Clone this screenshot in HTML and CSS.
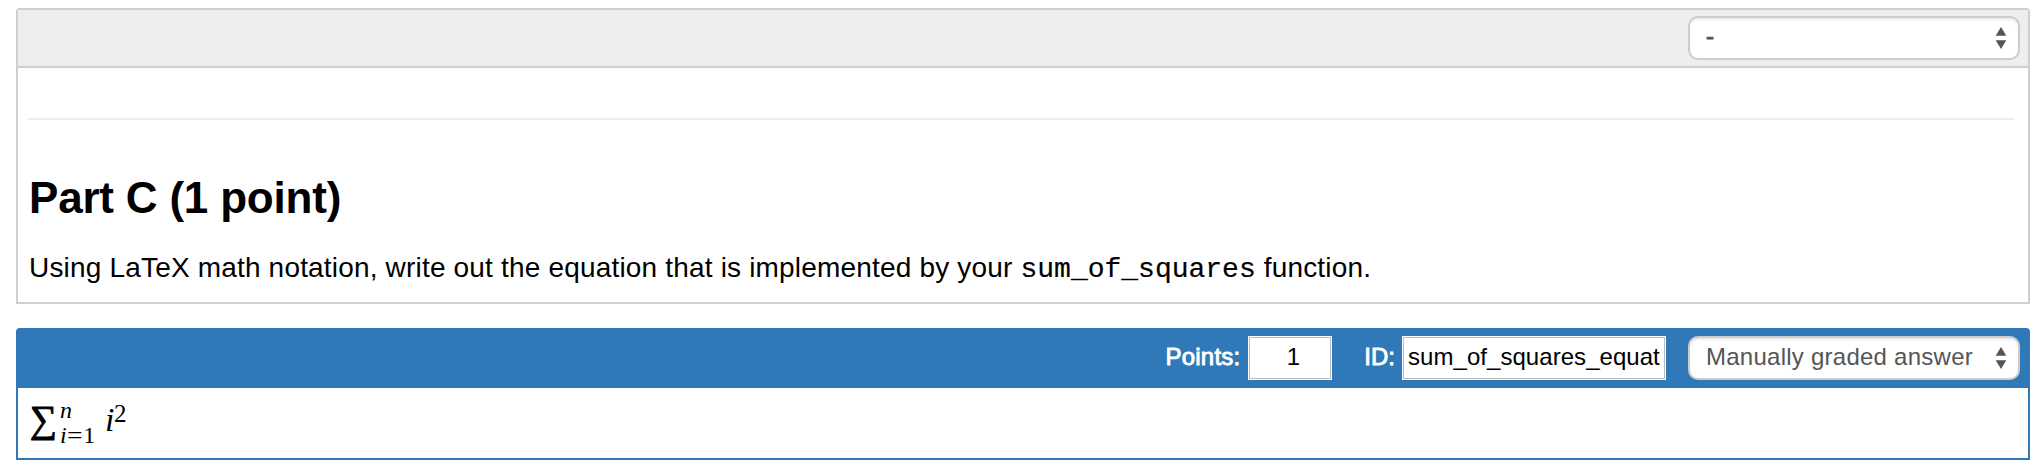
FILE: index.html
```html
<!DOCTYPE html>
<html lang="en">
<head>
<meta charset="utf-8">
<title>Notebook</title>
<link rel="stylesheet" href="styles.css">
</head>
<body>
<main class="notebook">
  <section class="cell">
    <div class="toolbar">
      <div class="select"><span class="select-label dash">-</span><svg class="arrows" width="12" height="22" viewBox="0 0 12 22"><path d="M6 0L11.3 8.7H.7ZM6 22L11.3 13.3H.7Z"/></svg></div>
    </div>
    <div class="content">
      <hr class="rule">
      <h2 class="title">Part C (1 point)</h2>
      <p class="text">Using LaTeX math notation, write out the equation that is implemented by your <code class="code">sum_of_squares</code> function.</p>
    </div>
  </section>
  <section class="cell graded">
    <div class="toolbar">
      <label class="field"><span class="field-label points-label">Points:</span><input class="input points" value="1"></label>
      <label class="field"><span class="field-label id-label">ID:</span><input class="input ident" value="sum_of_squares_equat"></label>
      <div class="select"><span class="select-label">Manually graded answer</span><svg class="arrows" width="12" height="22" viewBox="0 0 12 22"><path d="M6 0L11.3 8.7H.7ZM6 22L11.3 13.3H.7Z"/></svg></div>
    </div>
    <div class="math">
      <span class="sigma">∑</span>
      <span class="limits"><i class="upper">n</i><span class="lower"><i>i</i><span class="equals">=</span>1</span></span>
      <i class="base">i</i><span class="power">2</span>
    </div>
  </section>
</main>
</body>
</html>
```

FILE: styles.css
```css
* { box-sizing: border-box; }
body {
  margin: 0;
  background: #fff;
  color: #000;
  font-family: "Liberation Sans", Arial, sans-serif;
}
.notebook {
  display: flex;
  flex-direction: column;
  gap: 24px;
  padding: 8px 12px 8px 16px;
}
.cell {
  height: 296px;
  border: 2px solid #cfcfcf;
  border-radius: 4px 4px 0 0;
}
.toolbar {
  display: flex;
  justify-content: flex-end;
  height: 58px;
  padding: 6px 8px;
  background: #eee;
  border-bottom: 2px solid #cfcfcf;
}
.select {
  display: flex;
  align-items: center;
  justify-content: space-between;
  width: 332px;
  height: 44px;
  padding: 0 11px 0 16px;
  background: #fff;
  border: 2px solid #ccc;
  border-radius: 10px;
  box-shadow: inset 0 2px 2px rgba(0, 0, 0, .075);
  color: #555;
  font-size: 24px;
}
.select-label {
  padding-bottom: 2px;
  white-space: nowrap;
  letter-spacing: .25px;
}
.dash {
  padding-bottom: 4px;
  -webkit-text-stroke: .9px #555;
}
.arrows { fill: #555; flex: none; }
.content { padding: 50px 14px 0 10px; }
.rule {
  height: 2px;
  margin: 0;
  border: 0;
  background: #eee;
}
.title {
  margin: 56px 0 0;
  padding-left: 1px;
  font-size: 44px;
  line-height: 44px;
  letter-spacing: -.2px;
  white-space: nowrap;
}
.text {
  margin: 28px 0 0;
  padding-left: 1px;
  font-size: 28px;
  line-height: 40px;
  letter-spacing: .18px;
  white-space: nowrap;
}
.code {
  font-family: "Liberation Mono", monospace;
  font-size: 28px;
  letter-spacing: 0;
  -webkit-text-stroke: .2px #000;
}
.graded {
  height: 132px;
  border-color: #2f79b9;
}
.graded .toolbar { background: #2f79b9; border-color: #2f79b9; }
.field { display: flex; align-items: center; }
.field-label {
  padding-bottom: 2px;
  color: #fff;
  font-size: 24px;
  -webkit-text-stroke: .9px #fff;
}
.points-label { margin-right: 8px; letter-spacing: .2px; }
.id-label { margin-right: 7px; }
.input {
  height: 44px;
  padding: 0 4px 2px;
  border: 1px solid #fff;
  outline: 1px solid #bbb;
  outline-offset: -2px;
  border-radius: 0;
  background: #fff;
  color: #000;
  font: 24px "Liberation Sans", Arial, sans-serif;
}
.points { width: 84px; margin-right: 32px; padding-left: 10px; text-align: center; }
.ident { width: 264px; margin-right: 22px; padding-left: 5px; letter-spacing: .05px; }
.math {
  display: flex;
  height: 70px;
  padding: 12px 0 0 12px;
  font-family: "Liberation Serif", "Times New Roman", serif;
  line-height: 1;
}
.sigma {
  width: 30px;
  font-size: 38px;
  -webkit-text-stroke: .9px #000;
}
.limits {
  display: flex;
  flex-direction: column;
  width: 45px;
  font-size: 24px;
  line-height: 24px;
}
.upper { height: 25px; margin-top: -2px; }
.equals { display: inline-block; margin: 0 1.5px; transform: scaleX(1.15); }
.base { width: 9px; padding-top: 3px; font-size: 34px; }
.power { padding-top: 1px; font-size: 25px; }
```
